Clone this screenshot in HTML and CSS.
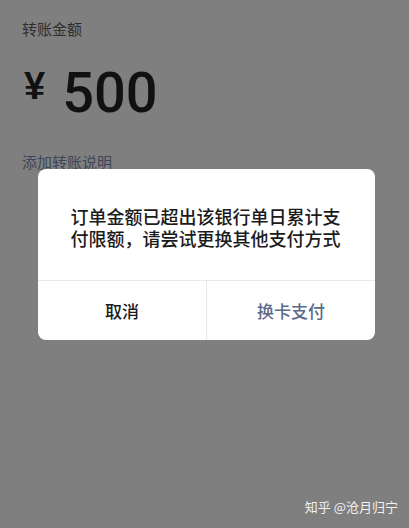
FILE: index.html
```html
<!DOCTYPE html>
<html lang="zh-CN">
<head>
  <meta charset="UTF-8">
  <title>转账</title>
  <link rel="stylesheet" href="styles.css">
</head>
<body>
  <div class="page">
    <div class="label">转账金额</div>
    <div class="amount"><span class="yen">¥</span><span class="num">500</span></div>
    <div class="note">添加转账说明</div>
  </div>

  <div class="dialog">
    <p class="msg">订单金额已超出该银行单日累计支付限额，请尝试更换其他支付方式</p>
    <div class="actions">
      <div class="btn cancel">取消</div>
      <div class="btn switch">换卡支付</div>
    </div>
  </div>

  <div class="mark">知乎 @沧月归宁</div>
</body>
</html>
```

FILE: styles.css
```css
body {
  margin: 0;
  width: 409px;
  height: 528px;
  background: #7f7f7f;
  font-family: "Noto Sans CJK SC", "Noto Sans", sans-serif;
  position: relative;
  overflow: hidden;
}
.page {
  padding: 19px 22px 0;
}
.label {
  font-size: 15px;
  line-height: 20px;
  color: #2e2e2e;
}
.amount {
  margin-top: 24px;
  height: 60px;
  display: flex;
  align-items: flex-start;
  color: #111;
}
.yen {
  font-family: "Liberation Sans", sans-serif;
  font-weight: bold;
  font-size: 38px;
  line-height: 38px;
  margin-top: 4px;
  margin-left: 2px;
}
.num {
  font-family: Roboto, sans-serif;
  font-weight: 500;
  font-size: 56px;
  line-height: 60px;
  margin-left: 17px;
}
.note {
  margin-top: 29px;
  font-size: 15px;
  line-height: 20px;
  color: #3e4658;
}
.dialog {
  position: absolute;
  left: 38px;
  top: 169px;
  width: 337px;
  background: #fff;
  border-radius: 8px;
  overflow: hidden;
}
.msg {
  margin: 0;
  padding: 36px 31px 31px 29px;
  font-size: 18px;
  font-weight: 500;
  line-height: 22px;
  color: #1b1b1b;
  text-align: center;
}
.actions {
  display: flex;
  border-top: 1px solid #e8e8e8;
  height: 59px;
}
.btn {
  flex: 1;
  display: flex;
  align-items: center;
  justify-content: center;
  font-size: 17px;
  font-weight: 500;
}
.cancel {
  color: #1b1b1b;
  border-right: 1px solid #e8e8e8;
}
.switch {
  color: #5b6a88;
}
.mark {
  position: absolute;
  right: 11px;
  bottom: 12px;
  font-size: 13px;
  color: #f2f2f2;
}
```
